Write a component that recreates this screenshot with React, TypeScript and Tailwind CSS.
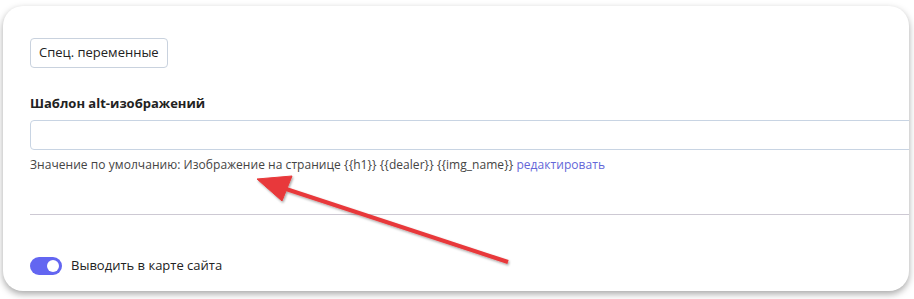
export default function App() {
  return (
    <div className="relative h-[299px] w-[914px] overflow-hidden bg-white font-['Open_Sans',sans-serif]">
      <div className="ml-[3px] mt-[6px] h-[285px] w-[906px] overflow-hidden rounded-[20px] bg-white shadow-[0_3px_7px_rgba(0,0,0,0.35)]">
        <div className="w-[1000px] pl-[27px] pt-[32px]">
          <button className="h-[30px] rounded-[4px] border border-[#c9d2de] bg-white px-[8px] text-[13px] text-[#222]">
            Спец. переменные
          </button>
          <div className="mt-[26px] text-[13px] font-bold leading-[18px] text-[#222]">Шаблон alt-изображений</div>
          <div className="mt-[8px] h-[30px] rounded-[4px] border border-[#c8d4e3] bg-white" />
          <div className="mt-[7px] text-[12px] leading-[16px] tracking-[0.05px] text-[#444]">
            Значение по умолчанию: Изображение на странице {"{{h1}}"} {"{{dealer}}"} {"{{img_name}}"}{" "}
            <span className="text-[#6366d8]">редактировать</span>
          </div>
          <div className="mt-[41px] h-px bg-[#cdc9d3]" />
          <div className="mt-[41px] flex items-center gap-[9px]">
            <div className="flex h-[18px] w-[32px] items-center justify-end rounded-full bg-[#6366f1] pr-[3px]">
              <div className="h-[12px] w-[12px] rounded-full bg-white" />
            </div>
            <span className="text-[13px] text-[#222]">Выводить в карте сайта</span>
          </div>
        </div>
      </div>
      <svg className="pointer-events-none absolute left-0 top-0" width="914" height="299">
        <defs>
          <filter id="sh" x="-10%" y="-10%" width="120%" height="120%">
            <feDropShadow dx="1" dy="1.5" stdDeviation="0.8" floodColor="#000" floodOpacity="0.35" />
          </filter>
        </defs>
        <g filter="url(#sh)" fill="#e8393a" stroke="#e8393a">
          <line x1="508" y1="262" x2="280" y2="187" strokeWidth="4" />
          <polygon points="257,179 292,176 282,201" strokeWidth="1" strokeLinejoin="round" />
        </g>
      </svg>
    </div>
  );
}
